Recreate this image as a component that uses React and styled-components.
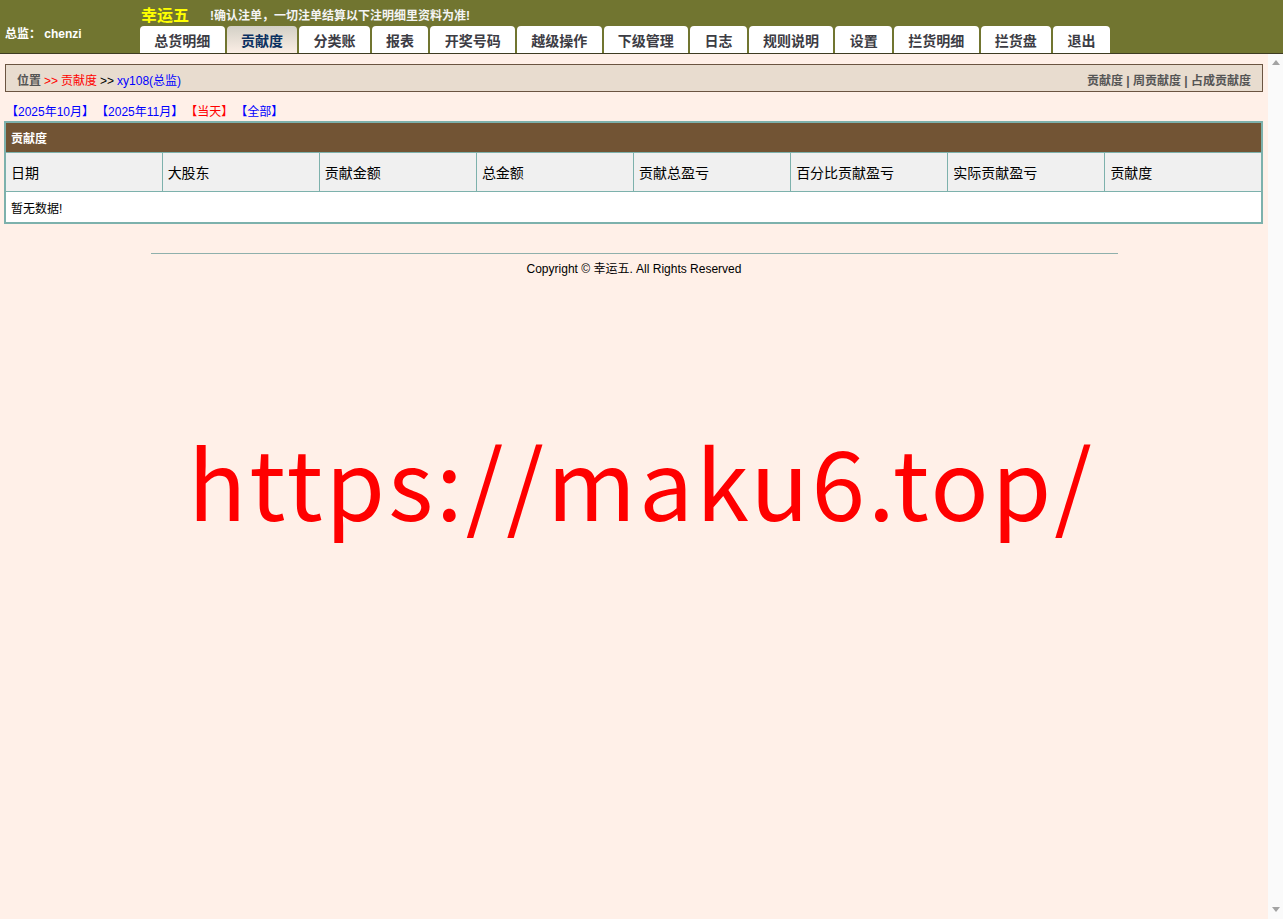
import React from "react"
import styled, { createGlobalStyle } from "styled-components"

const GlobalStyle = createGlobalStyle`
  html, body {
    margin: 0;
    padding: 0;
    height: 100%;
    overflow: hidden;
  }
  body {
    font-family: "Liberation Sans", Arial, "Noto Sans CJK SC", sans-serif;
    font-size: 12px;
    background: #fff0e8;
  }
`

const Page = styled.div`
  display: flex;
  flex-direction: column;
  height: 100vh;
`

const TopBar = styled.div`
  display: flex;
  height: 53px;
  background: #717530;
  border-bottom: 1px solid #3e3c22;
  flex-shrink: 0;
`

const UserBox = styled.div`
  width: 140px;
  padding: 24px 0 0 5px;
  box-sizing: border-box;
  color: #fff;
  font-weight: bold;
  font-size: 12px;
`

const TopRight = styled.div`
  display: flex;
  flex-direction: column;
`

const TitleRow = styled.div`
  display: flex;
  align-items: center;
  height: 26px;
  padding-top: 2px;
  box-sizing: border-box;
`

const Brand = styled.span`
  color: #ffff00;
  font-weight: bold;
  font-size: 16px;
  margin-left: 1px;
  width: 69px;
`

const Notice = styled.span`
  color: #f4f4f4;
  font-weight: bold;
  font-size: 12px;
`

const Tabs = styled.div`
  display: flex;
  gap: 2px;
  height: 27px;
`

const Tab = styled.a`
  display: flex;
  align-items: center;
  justify-content: center;
  padding: 1px 14.3px 0;
  border-radius: 4px 4px 0 0;
  background: ${p => (p.$active ? "linear-gradient(#d3d0c6, #fbeee5)" : "#fff")};
  color: ${p => (p.$active ? "#0a3060" : "#3c3c44")};
  font-weight: bold;
  font-size: 14px;
  cursor: pointer;
  white-space: nowrap;
`

const Frame = styled.div`
  flex: 1;
  display: flex;
  min-height: 0;
`

const Content = styled.div`
  flex: 1;
  min-width: 0;
  background: #fff0e8;
`

const ScrollTrack = styled.div`
  width: 15px;
  flex-shrink: 0;
  background: #fafafa;
  display: flex;
  flex-direction: column;
  justify-content: space-between;
  align-items: center;
  padding: 6px 0 7px;
  box-sizing: border-box;
`

const Arrow = styled.div`
  width: 0;
  height: 0;
  border-left: 4.5px solid transparent;
  border-right: 4.5px solid transparent;
  ${p => (p.$down ? "border-top: 5px solid #a3a3a3;" : "border-bottom: 5px solid #a3a3a3;")}
`

const PosBar = styled.div`
  display: flex;
  justify-content: space-between;
  align-items: center;
  margin: 10px 5px 0 5px;
  height: 24px;
  padding: 2px 11px 0 11px;
  border: 1px solid #6b5441;
  background: #e8dccf;
  font-size: 12px;
`

const Crumbs = styled.div`
  color: #555;
  span { margin-right: 3px; }
`

const Crumb = styled.span`
  color: ${p => p.$c};
  font-weight: ${p => (p.$bold ? "bold" : "normal")};
`

const QuickLinks = styled.div`
  color: #555;
  font-weight: bold;
`

const DateRow = styled.div`
  display: flex;
  gap: 2px;
  padding: 10px 0 0 6px;
  height: 19px;
`

const DateLink = styled.a`
  color: ${p => (p.$on ? "#ff0000" : "#0000ff")};
  font-size: 12px;
  cursor: pointer;
`

const Table = styled.table`
  margin: 0 5px 0 4px;
  width: calc(100% - 9px);
  border-collapse: collapse;
  border: 2px solid #7db1ac;
  table-layout: fixed;
`

const TitleCell = styled.th`
  height: 29px;
  background: #725434;
  border-top: 1px solid #8c6c4c;
  color: #fff;
  font-weight: bold;
  font-size: 12px;
  text-align: left;
  padding: 0 5px;
`

const HeadCell = styled.th`
  height: 38px;
  background: #f0f0f0;
  border: 1px solid #7db1ac;
  font-weight: normal;
  font-size: 14px;
  text-align: left;
  padding: 0 5px;
  color: #000;
  font-family: "Noto Sans CJK SC", sans-serif;
`

const EmptyCell = styled.td`
  height: 30px;
  background: #fff;
  font-size: 12px;
  padding: 0 5px;
  color: #000;
`

const Footer = styled.div`
  margin: 29px auto 0;
  width: 967px;
  border-top: 1px solid #8fb0ac;
  text-align: center;
  padding-top: 5px;
  font-size: 12px;
  color: #000;
`

const Watermark = styled.div`
  position: fixed;
  left: 0;
  right: 0;
  top: 432px;
  text-align: center;
  color: #ff0000;
  font-family: "Noto Sans CJK SC", sans-serif;
  font-size: 96px;
  letter-spacing: 3px;
  line-height: 1;
  pointer-events: none;
`

const tabs = ["总货明细", "贡献度", "分类账", "报表", "开奖号码", "越级操作", "下级管理", "日志", "规则说明", "设置", "拦货明细", "拦货盘", "退出"]
const cols = ["日期", "大股东", "贡献金额", "总金额", "贡献总盈亏", "百分比贡献盈亏", "实际贡献盈亏", "贡献度"]

export default function App() {
  return (
    <>
      <GlobalStyle />
      <Page>
        <TopBar>
          <UserBox>总监： chenzi</UserBox>
          <TopRight>
            <TitleRow>
              <Brand>幸运五</Brand>
              <Notice>!确认注单，一切注单结算以下注明细里资料为准!</Notice>
            </TitleRow>
            <Tabs>
              {tabs.map(t => (
                <Tab key={t} $active={t === "贡献度"}>{t}</Tab>
              ))}
            </Tabs>
          </TopRight>
        </TopBar>

        <Frame>
          <Content>
            <PosBar>
              <Crumbs>
                <Crumb $c="#555" $bold>位置</Crumb>
                <Crumb $c="#ff0000">&gt;&gt;</Crumb>
                <Crumb $c="#ff0000">贡献度</Crumb>
                <Crumb $c="#000">&gt;&gt;</Crumb>
                <Crumb $c="#0000ff">xy108(总监)</Crumb>
              </Crumbs>
              <QuickLinks>贡献度 | 周贡献度 | 占成贡献度</QuickLinks>
            </PosBar>

            <DateRow>
              <DateLink>【2025年10月】</DateLink>
              <DateLink>【2025年11月】</DateLink>
              <DateLink $on>【当天】</DateLink>
              <DateLink>【全部】</DateLink>
            </DateRow>

            <Table>
              <thead>
                <tr>
                  <TitleCell colSpan={8}>贡献度</TitleCell>
                </tr>
                <tr>
                  {cols.map(c => (
                    <HeadCell key={c}>{c}</HeadCell>
                  ))}
                </tr>
              </thead>
              <tbody>
                <tr>
                  <EmptyCell colSpan={8}>暂无数据!</EmptyCell>
                </tr>
              </tbody>
            </Table>

            <Footer>Copyright © 幸运五. All Rights Reserved</Footer>
          </Content>
          <ScrollTrack>
            <Arrow />
            <Arrow $down />
          </ScrollTrack>
        </Frame>
      </Page>
      <Watermark>https://maku6.top/</Watermark>
    </>
  )
}
